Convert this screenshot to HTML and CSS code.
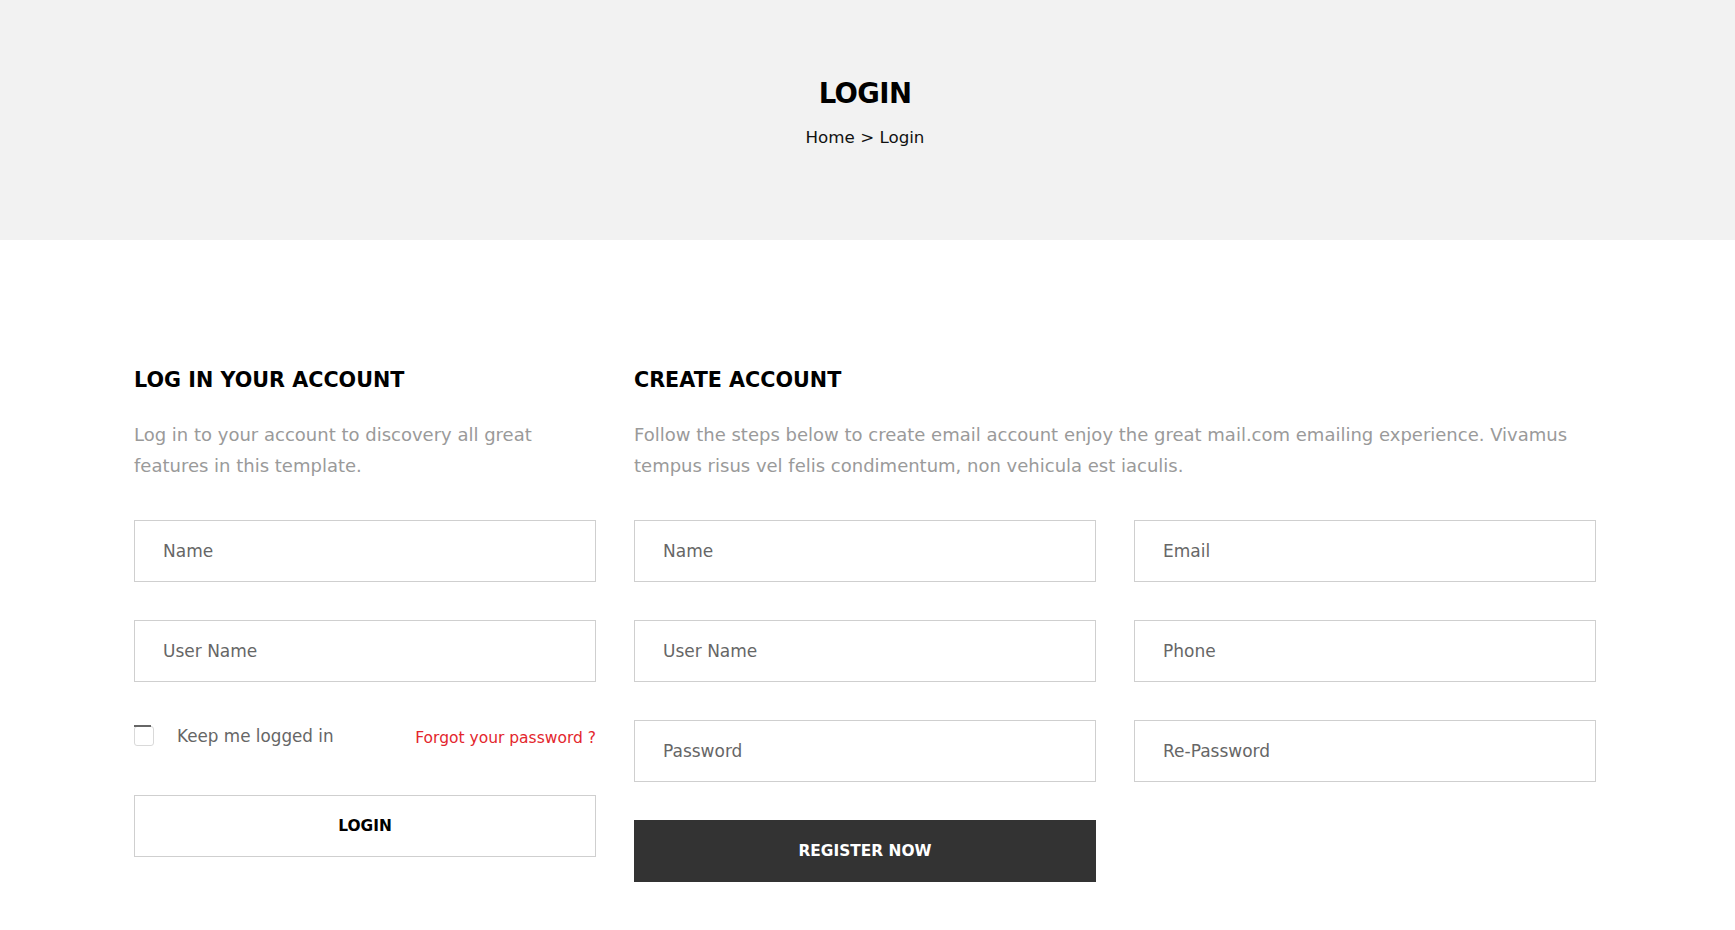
FILE: index.html
```html
<!DOCTYPE html>
<html lang="en">
<head>
<meta charset="utf-8">
<title>Login</title>
<link rel="stylesheet" href="styles.css">
</head>
<body>
<header class="page-header">
  <div class="wrap header-inner">
    <h1 class="page-title">LOGIN</h1>
    <nav class="breadcrumb"><a href="#">Home</a> <span class="sep">&gt;</span> <span>Login</span></nav>
  </div>
</header>
<main class="wrap">
  <div class="container">
    <section class="login-col">
      <h2 class="section-title">LOG IN YOUR ACCOUNT</h2>
      <p class="section-text">Log in to your account to discovery all great features in this template.</p>
      <form class="form-stack">
        <input class="field" type="text" placeholder="Name">
        <input class="field" type="text" placeholder="User Name">
        <div class="remember-row">
          <label class="remember"><span class="check"></span><span class="remember-text">Keep me logged in</span></label>
          <a class="forgot" href="#">Forgot your password ?</a>
        </div>
        <button class="btn btn-outline" type="button">LOGIN</button>
      </form>
    </section>
    <section class="register-col">
      <h2 class="section-title">CREATE ACCOUNT</h2>
      <p class="section-text">Follow the steps below to create email account enjoy the great mail.com emailing experience. Vivamus tempus risus vel felis condimentum, non vehicula est iaculis.</p>
      <form class="form-grid">
        <input class="field" type="text" placeholder="Name">
        <input class="field" type="text" placeholder="Email">
        <input class="field" type="text" placeholder="User Name">
        <input class="field" type="text" placeholder="Phone">
        <input class="field" type="password" placeholder="Password">
        <input class="field" type="password" placeholder="Re-Password">
        <button class="btn btn-dark" type="button">REGISTER NOW</button>
      </form>
    </section>
  </div>
</main>
</body>
</html>
```

FILE: styles.css
```css
* { box-sizing: border-box; }
html, body { margin: 0; padding: 0; }
body {
  font-family: "DejaVu Sans", "Liberation Sans", sans-serif;
  color: #333;
  background: #fff;
  width: 1735px;
}
.wrap { width: 1730px; }

/* header band */
.page-header {
  background: #f2f2f2;
  height: 240px;
}
.header-inner {
  padding-top: 73px;
  text-align: center;
}
.page-title {
  margin: 0 0 12px;
  font-size: 27.5px;
  letter-spacing: -0.6px;
  line-height: 40px;
  font-weight: 700;
  color: #000;
}
.breadcrumb {
  font-size: 16.7px;
  line-height: 24px;
  color: #111;
}
.breadcrumb a { color: #111; text-decoration: none; }

/* main */
.container {
  width: 1462px;
  margin: 0 auto;
  padding-top: 125px;
  display: grid;
  grid-template-columns: 462px 962px;
  column-gap: 38px;
}
.section-title {
  margin: 0 0 24px;
  font-size: 20.7px;
  line-height: 30px;
  font-weight: 700;
  color: #000;
}
.section-text {
  margin: 0 0 39px;
  font-size: 18px;
  line-height: 31px;
  color: #9a9a9a;
}

.field {
  display: block;
  width: 100%;
  height: 62px;
  border: 1px solid #cfcfcf;
  border-radius: 0;
  padding: 0 28px;
  font-family: inherit;
  font-size: 17px;
  color: #555;
  background: #fff;
  outline: none;
}
.field::placeholder { color: #666; opacity: 1; }

.form-stack {
  display: flex;
  flex-direction: column;
  gap: 38px;
}
.form-grid {
  display: grid;
  grid-template-columns: 462px 462px;
  column-gap: 38px;
  row-gap: 38px;
}

.remember-row {
  height: 37px;
  display: flex;
  justify-content: space-between;
  align-items: flex-start;
}
.remember {
  display: flex;
  align-items: flex-start;
  cursor: pointer;
}
.check {
  position: relative;
  width: 20px;
  height: 20px;
  margin-top: 6px;
  border: 1px solid #d9d9d9;
  border-radius: 3px;
  background: #fff;
}
.check::before {
  content: "";
  position: absolute;
  left: -1px;
  top: -2px;
  width: 17px;
  height: 2px;
  background: #666;
}
.remember-text {
  margin-left: 23px;
  font-size: 16.8px;
  line-height: 32px;
  color: #666;
}
.forgot {
  font-size: 15.5px;
  line-height: 37px;
  color: #e3262d;
  text-decoration: none;
}

.btn {
  display: block;
  height: 62px;
  width: 100%;
  font-family: inherit;
  font-size: 15.4px;
  font-weight: 700;
  cursor: pointer;
  border-radius: 0;
}
.btn-outline {
  background: #fff;
  border: 1px solid #cfcfcf;
  color: #000;
}
.btn-dark {
  background: #333;
  border: none;
  color: #fff;
}
```
